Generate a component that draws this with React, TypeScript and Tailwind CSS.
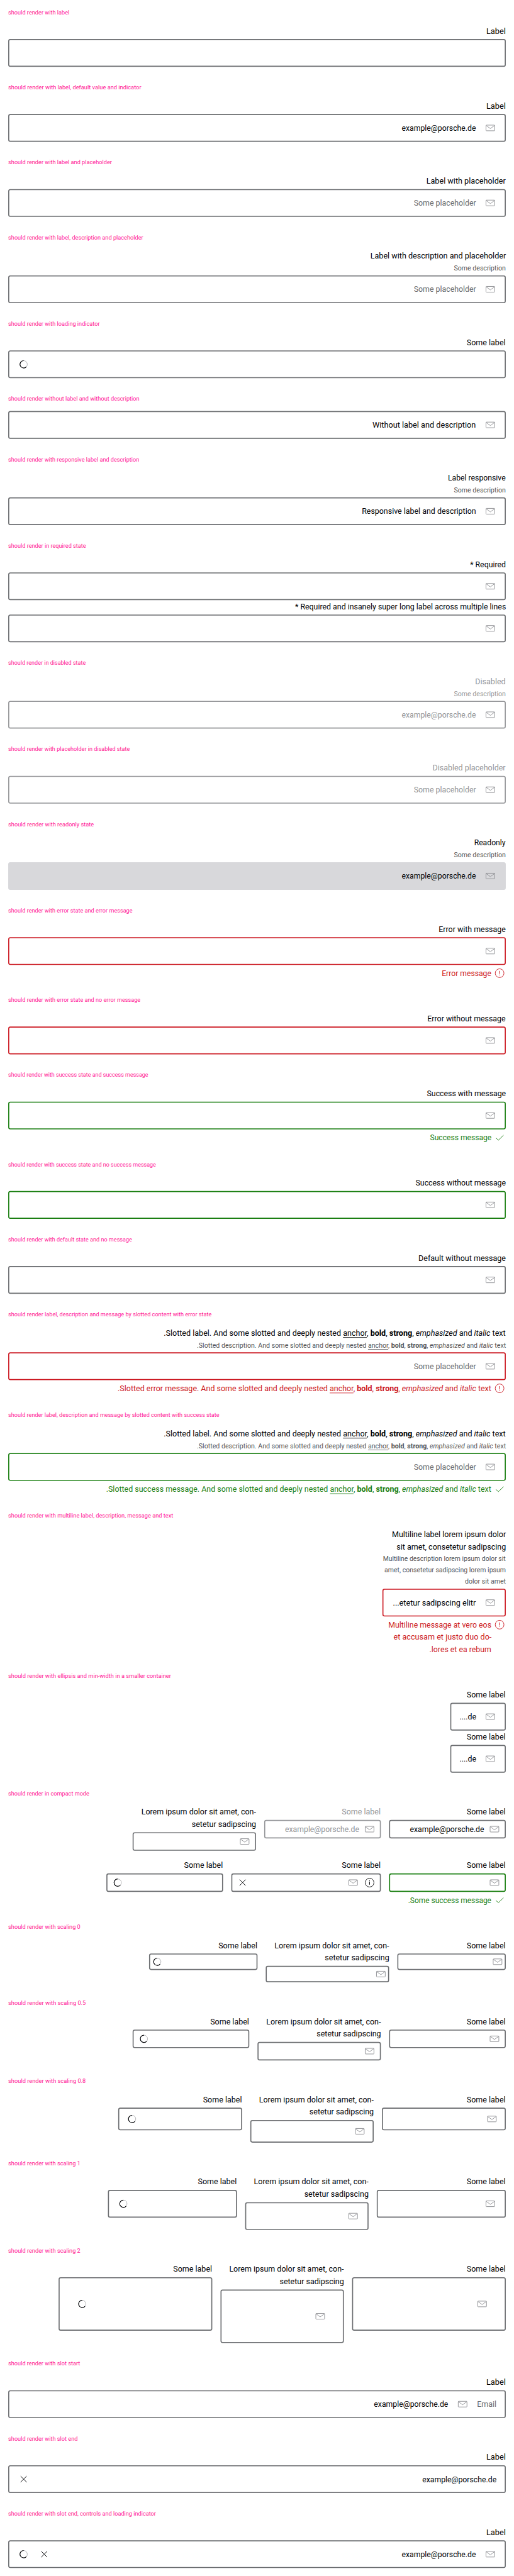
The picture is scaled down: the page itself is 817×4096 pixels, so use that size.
import { useLayoutEffect, useRef } from "react";
import type { ReactNode } from "react";

/** Single line of text, condensed horizontally to the given advance width. */
function Line({ w, className = "", left = false, children }: { w: number; className?: string; left?: boolean; children: ReactNode }) {
  const inner = useRef<HTMLSpanElement>(null);
  useLayoutEffect(() => {
    const el = inner.current;
    if (el) el.style.transform = `translateY(${left ? 0 : 0.5}px) scaleX(${w / el.offsetWidth})`;
  });
  return (
    <span className={`flex shrink-0 whitespace-nowrap ${left ? "justify-start" : "justify-end"} ${className}`} style={{ width: w }}>
      <span ref={inner} className={`block shrink-0 ${left ? "origin-left" : "origin-right"}`}>{children}</span>
    </span>
  );
}

function Mail() {
  return (
    <svg viewBox="0 0 24 24" fill="none" strokeWidth="1.1" className="size-6 shrink-0 stroke-[#88898d]">
      <rect x="3.5" y="6.5" width="17" height="11" rx="1" />
      <path d="M3.8 7.2 L12 13.2 L20.2 7.2" />
    </svg>
  );
}
function Close() {
  return (
    <svg viewBox="0 0 24 24" fill="none" strokeWidth="1.2" className="size-6 shrink-0 stroke-[#010205]">
      <path d="M6.2 6.2 L17.8 17.8 M17.8 6.2 L6.2 17.8" />
    </svg>
  );
}
function Info() {
  return (
    <svg viewBox="0 0 24 24" fill="none" strokeWidth="1.1" className="size-6 shrink-0 stroke-[#010205]">
      <circle cx="12" cy="12" r="8.5" />
      <path d="M12 10.4 V16 M12 7.8 V9.2" strokeWidth="1.3" />
    </svg>
  );
}
function Spinner() {
  return (
    <svg viewBox="0 0 24 24" fill="none" strokeWidth="1.4" className="size-6 shrink-0">
      <circle cx="12" cy="12" r="7.1" className="stroke-[#a3a4a8]" strokeWidth="1" />
      <path d="M12 4.9 A7.1 7.1 0 1 0 17.4 16.6" className="stroke-[#010205]" />
    </svg>
  );
}
function ErrorIcon() {
  return (
    <svg viewBox="0 0 24 24" fill="none" strokeWidth="1.1" className="size-6 shrink-0 stroke-[#cc1922]">
      <circle cx="12" cy="12" r="8.5" />
      <path d="M12 7.6 V13.4 M12 14.8 V16.2" strokeWidth="1.3" />
    </svg>
  );
}
function Check() {
  return (
    <svg viewBox="0 0 24 24" fill="none" strokeWidth="1.1" className="size-6 shrink-0 stroke-[#197e10]">
      <path d="M4.8 12.8 L9.8 17 L19.6 7.4" />
    </svg>
  );
}

type State = "none" | "error" | "success" | "disabled" | "readonly";
const BORDER: Record<State, string> = {
  none: "border-[#6b6d70]",
  error: "border-[#cc1922]",
  success: "border-[#197e10]",
  disabled: "border-[#949598]",
  readonly: "border-[#d8d8db] bg-[#d8d8db]",
};
type Size = "s0" | "s05" | "s08" | "s1" | "s2";
const BOX: Record<Size, string> = {
  s0: "h-8 px-0.5 gap-0.5",
  s05: "h-9 px-2 gap-2",
  s08: "h-11 px-[13px] gap-[13px]",
  s1: "h-[54px] px-4 gap-4",
  s2: "h-[104px] px-8 gap-8",
};

type Txt = [string, number];
type FieldProps = {
  width?: string;
  label?: ReactNode;
  desc?: ReactNode;
  state?: State;
  size?: Size;
  value?: Txt;
  placeholder?: Txt;
  icon?: boolean;
  start?: ReactNode;
  end?: ReactNode;
  message?: ReactNode;
};

function Field({ width = "w-full", label, desc, state = "none", size = "s1", value, placeholder, icon = true, start, end, message }: FieldProps) {
  const dis = state === "disabled";
  return (
    <div className={`flex shrink-0 flex-col items-end ${width}`}>
      {label && <div className={`flex flex-col items-end ${dis ? "text-[#949598]" : "text-[#010205]"}`}>{label}</div>}
      {desc && <div className={`flex flex-col items-end text-[14px] leading-[22px] ${dis ? "text-[#949598]" : "text-[#535457]"}`}>{desc}</div>}
      <div className={`flex w-full items-center rounded border-2 ${label ? "mt-1" : ""} ${BORDER[state]} ${BOX[size]}`}>
        {end}
        <div className="flex min-w-0 flex-1 justify-end">
          {value && <Line w={value[1]} className={dis ? "text-[#949598]" : "text-[#010205]"}>{value[0]}</Line>}
          {placeholder && <Line w={placeholder[1]} className={dis ? "text-[#949598]" : "text-[#6b6d70]"}>{placeholder[0]}</Line>}
        </div>
        {icon && <Mail />}
        {start}
      </div>
      {message && (
        <div className={`mt-1 flex items-start gap-1 ${state === "error" ? "text-[#cc1922]" : "text-[#197e10]"}`}>
          <div className="flex flex-col items-end">{message}</div>
          {state === "error" ? <ErrorIcon /> : <Check />}
        </div>
      )}
    </div>
  );
}

function Section({ title, w, children }: { title: string; w: number; children: ReactNode }) {
  return (
    <section className="p-4">
      <h2 className="mb-4 flex h-4 text-[12px] leading-4 text-[#ff1493]">
        <Line w={w} left>{title}</Line>
      </h2>
      {children}
    </section>
  );
}

const Rich = () => (
  <>
    <u className="decoration-1 underline-offset-[3px]">anchor</u>, <b>bold</b>, <strong>strong</strong>, <em>emphasized</em> and <i>italic</i> text
  </>
);
const MAIL: Txt = ["example@porsche.de", 144.5];
const PLACE: Txt = ["Some placeholder", 121];
const SomeLabel = () => <Line w={76}>Some label</Line>;
const Label = () => <Line w={38}>Label</Line>;
const SomeDesc = () => <Line w={101}>Some description</Line>;
const LoremLabel = () => (
  <>
    <Line w={223}>Lorem ipsum dolor sit amet, con-</Line>
    <Line w={125}>setetur sadipscing</Line>
  </>
);

function ScalingRow({ size, width }: { size: Size; width: string }) {
  return (
    <div className="flex flex-row-reverse items-start gap-4">
      <Field width={width} size={size} label={<SomeLabel />} />
      <Field width="w-[240px]" size={size} label={<LoremLabel />} />
      <Field width={width} size={size} label={<SomeLabel />} icon={false} end={<Spinner />} />
    </div>
  );
}

export default function App() {
  return (
    <div className="h-[4096px] w-[817px] overflow-hidden bg-white">
      <main className="h-[5013px] w-[1000px] origin-top-left scale-[0.817] bg-white font-['Roboto',sans-serif] text-[16.5px] leading-6 text-[#010205]">
        <Section title="should render with label" w={119}>
          <Field label={<Label />} icon={false} />
        </Section>
        <Section title="should render with label, default value and indicator" w={258.5}>
          <Field label={<Label />} value={MAIL} />
        </Section>
        <Section title="should render with label and placeholder" w={201.5}>
          <Field label={<Line w={154.5}>Label with placeholder</Line>} placeholder={PLACE} />
        </Section>
        <Section title="should render with label, description and placeholder" w={262.5}>
          <Field label={<Line w={263.5}>Label with description and placeholder</Line>} desc={<SomeDesc />} placeholder={PLACE} />
        </Section>
        <Section title="should render with loading indicator" w={178.5}>
          <Field label={<SomeLabel />} icon={false} end={<Spinner />} />
        </Section>
        <Section title="should render without label and without description" w={255.5}>
          <Field value={["Without label and description", 201.5]} />
        </Section>
        <Section title="should render with responsive label and description" w={254.5}>
          <Field label={<Line w={112.5}>Label responsive</Line>} desc={<SomeDesc />} value={["Responsive label and description", 222]} />
        </Section>
        <Section title="should render in required state" w={151}>
          <Field label={<Line w={69.5}>* Required</Line>} />
          <Field label={<Line w={410}>* Required and insanely super long label across multiple lines</Line>} />
        </Section>
        <Section title="should render in disabled state" w={151}>
          <Field state="disabled" label={<Line w={59.5}>Disabled</Line>} desc={<SomeDesc />} value={MAIL} />
        </Section>
        <Section title="should render with placeholder in disabled state" w={237}>
          <Field state="disabled" label={<Line w={142.5}>Disabled placeholder</Line>} placeholder={PLACE} />
        </Section>
        <Section title="should render with readonly state" w={166.5}>
          <Field state="readonly" label={<Line w={61.5}>Readonly</Line>} desc={<SomeDesc />} value={MAIL} />
        </Section>
        <Section title="should render with error state and error message" w={242}>
          <Field state="error" label={<Line w={130.5}>Error with message</Line>} message={<Line w={96.5}>Error message</Line>} />
        </Section>
        <Section title="should render with error state and no error message" w={257}>
          <Field state="error" label={<Line w={152.5}>Error without message</Line>} />
        </Section>
        <Section title="should render with success state and success message" w={272}>
          <Field state="success" label={<Line w={153.5}>Success with message</Line>} message={<Line w={119.5}>Success message</Line>} />
        </Section>
        <Section title="should render with success state and no success message" w={287.5}>
          <Field state="success" label={<Line w={175.5}>Success without message</Line>} />
        </Section>
        <Section title="should render with default state and no message" w={241}>
          <Field label={<Line w={170}>Default without message</Line>} />
        </Section>
        <Section title="should render label, description and message by slotted content with error state" w={396}>
          <Field
            state="error"
            label={<Line w={665.5}>.Slotted label. And some slotted and deeply nested <Rich /></Line>}
            desc={<Line w={601}>.Slotted description. And some slotted and deeply nested <Rich /></Line>}
            placeholder={PLACE}
            message={<Line w={727}>.Slotted error message. And some slotted and deeply nested <Rich /></Line>}
          />
        </Section>
        <Section title="should render label, description and message by slotted content with success state" w={411}>
          <Field
            state="success"
            label={<Line w={665.5}>.Slotted label. And some slotted and deeply nested <Rich /></Line>}
            desc={<Line w={601}>.Slotted description. And some slotted and deeply nested <Rich /></Line>}
            placeholder={PLACE}
            message={<Line w={749.5}>.Slotted success message. And some slotted and deeply nested <Rich /></Line>}
          />
        </Section>
        <Section title="should render with multiline label, description, message and text" w={321}>
          <div className="flex justify-end">
            <Field
              width="w-[240px]"
              state="error"
              label={
                <>
                  <Line w={221.5}>Multiline label lorem ipsum dolor</Line>
                  <Line w={212.5}>sit amet, consetetur sadipscing</Line>
                </>
              }
              desc={
                <>
                  <Line w={239}>Multiline description lorem ipsum dolor sit</Line>
                  <Line w={236}>amet, consetetur sadipscing lorem ipsum</Line>
                  <Line w={79.5}>dolor sit amet</Line>
                </>
              }
              value={["...etetur sadipscing elitr", 161.5]}
              message={
                <>
                  <Line w={200.5}>Multiline message at vero eos</Line>
                  <Line w={190.5}>et accusam et justo duo do-</Line>
                  <Line w={120.5}>.lores et ea rebum</Line>
                </>
              }
            />
          </div>
        </Section>
        <Section title="should render with ellipsis and min-width in a smaller container" w={317}>
          <div className="flex flex-col items-end">
            <Field width="w-[108px]" label={<SomeLabel />} value={["....de", 32]} />
            <Field width="w-[108px]" label={<SomeLabel />} value={["....de", 32]} />
          </div>
        </Section>
        <Section title="should render in compact mode" w={157.5}>
          <div className="flex flex-row-reverse items-start gap-4">
            <Field width="w-[227px]" size="s05" label={<SomeLabel />} value={MAIL} />
            <Field width="w-[227px]" size="s05" state="disabled" label={<SomeLabel />} value={MAIL} />
            <Field width="w-[240px]" size="s05" label={<LoremLabel />} />
          </div>
          <div className="mt-4 flex flex-row-reverse items-start gap-4">
            <Field width="w-[227px]" size="s05" state="success" label={<SomeLabel />} message={<Line w={162}>.Some success message</Line>} />
            <Field width="w-[291px]" size="s05" label={<SomeLabel />} start={<Info />} end={<Close />} />
            <Field width="w-[227px]" size="s05" label={<SomeLabel />} icon={false} end={<Spinner />} />
          </div>
        </Section>
        <Section title="should render with scaling 0" w={140}>
          <ScalingRow size="s0" width="w-[211px]" />
        </Section>
        <Section title="should render with scaling 0.5" w={150.5}>
          <ScalingRow size="s05" width="w-[227px]" />
        </Section>
        <Section title="should render with scaling 0.8" w={150.5}>
          <ScalingRow size="s08" width="w-[241px]" />
        </Section>
        <Section title="should render with scaling 1" w={140}>
          <ScalingRow size="s1" width="w-[251px]" />
        </Section>
        <Section title="should render with scaling 2" w={140}>
          <ScalingRow size="s2" width="w-[299px]" />
        </Section>
        <Section title="should render with slot start" w={139.5}>
          <Field label={<Label />} value={MAIL} start={<Line w={38} className="text-[#6b6d70]">Email</Line>} />
        </Section>
        <Section title="should render with slot end" w={135}>
          <Field label={<Label />} icon={false} value={MAIL} end={<Close />} />
        </Section>
        <Section title="should render with slot end, controls and loading indicator" w={287.5}>
          <Field label={<Label />} value={MAIL} end={<><Spinner /><Close /></>} />
        </Section>
      </main>
    </div>
  );
}
